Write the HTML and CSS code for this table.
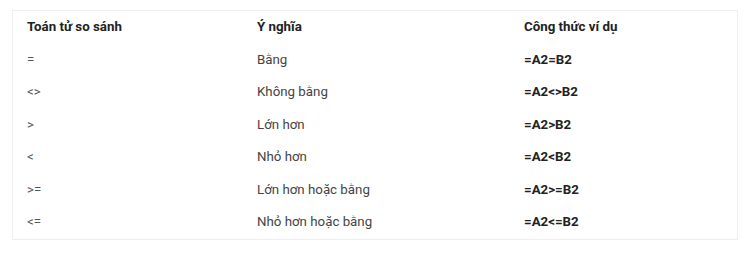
FILE: index.html
```html
<!DOCTYPE html>
<html lang="vi">
<head>
  <meta charset="UTF-8" />
  <title>Toán tử so sánh</title>
  <link rel="stylesheet" href="styles.css">
</head>
<body>
  <table class="compare-table">
    <thead>
      <tr>
        <th class="col-op">Toán tử so sánh</th>
        <th class="col-mean">Ý nghĩa</th>
        <th class="col-formula">Công thức ví dụ</th>
      </tr>
    </thead>
    <tbody>
      <tr><td class="op">=</td><td>Bằng</td><td class="formula">=A2=B2</td></tr>
      <tr><td class="op">&lt;&gt;</td><td>Không bằng</td><td class="formula">=A2&lt;&gt;B2</td></tr>
      <tr><td class="op">&gt;</td><td>Lớn hơn</td><td class="formula">=A2&gt;B2</td></tr>
      <tr><td class="op">&lt;</td><td>Nhỏ hơn</td><td class="formula">=A2&lt;B2</td></tr>
      <tr><td class="op">&gt;=</td><td>Lớn hơn hoặc bằng</td><td class="formula">=A2&gt;=B2</td></tr>
      <tr><td class="op">&lt;=</td><td>Nhỏ hơn hoặc bằng</td><td class="formula">=A2&lt;=B2</td></tr>
    </tbody>
  </table>
</body>
</html>
```

FILE: styles.css
```css
body {
  margin: 0;
  padding: 10px 0 0 12px;
  background: #fff;
  font-family: Roboto, "Liberation Sans", sans-serif;
  font-size: 13.3px;
  color: #444;
}

.compare-table {
  width: 726px;
  border-collapse: collapse;
  border: 1px solid #eeeeee;
  table-layout: fixed;
}

.compare-table th,
.compare-table td {
  height: 32.5px;
  padding: 0 14px;
  text-align: left;
  vertical-align: middle;
  line-height: 16px;
}

.compare-table th {
  font-weight: 700;
  color: #222;
}

.col-op { width: 202px; }
.col-mean { width: 239px; }

.op {
  color: #555;
}

.formula {
  font-weight: 700;
  color: #222;
}
```
